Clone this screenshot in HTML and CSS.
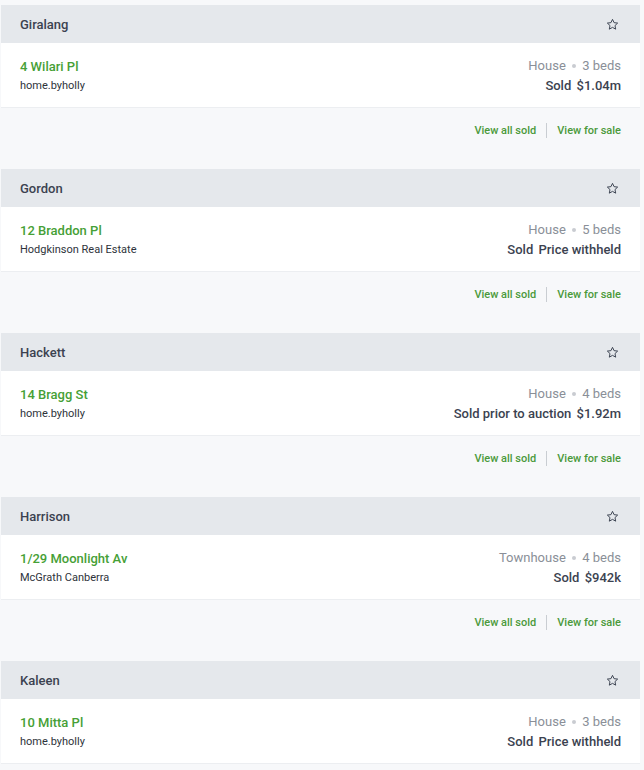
FILE: index.html
```html
<!DOCTYPE html>
<html lang="en">
<head>
    <meta charset="UTF-8">
    <meta name="viewport" content="width=device-width, initial-scale=1.0">
    <title>Recently sold</title>
    <link rel="stylesheet" href="styles.css">
</head>
<body>
    <div class="suburb-list">
        <section class="suburb">
            <div class="suburb-header">
                <h2>Giralang</h2>
                <svg class="star" viewBox="0 0 24 24"><path d="M12 2.5l2.9 6.1 6.6.8-4.9 4.6 1.3 6.6L12 17.3l-5.9 3.3 1.3-6.6-4.9-4.6 6.6-.8z"/></svg>
            </div>
            <div class="listing">
                <div class="listing-left">
                    <a class="address" href="#">4 Wilari Pl</a>
                    <span class="agency">home.byholly</span>
                </div>
                <div class="listing-right">
                    <span class="features">House <span class="dot"></span> 3 beds</span>
                    <span class="price"><span class="status">Sold</span> $1.04m</span>
                </div>
            </div>
            <div class="suburb-links">
                <a href="#">View all sold</a>
                <span class="divider"></span>
                <a href="#">View for sale</a>
            </div>
        </section>

        <section class="suburb">
            <div class="suburb-header">
                <h2>Gordon</h2>
                <svg class="star" viewBox="0 0 24 24"><path d="M12 2.5l2.9 6.1 6.6.8-4.9 4.6 1.3 6.6L12 17.3l-5.9 3.3 1.3-6.6-4.9-4.6 6.6-.8z"/></svg>
            </div>
            <div class="listing">
                <div class="listing-left">
                    <a class="address" href="#">12 Braddon Pl</a>
                    <span class="agency">Hodgkinson Real Estate</span>
                </div>
                <div class="listing-right">
                    <span class="features">House <span class="dot"></span> 5 beds</span>
                    <span class="price"><span class="status">Sold</span> Price withheld</span>
                </div>
            </div>
            <div class="suburb-links">
                <a href="#">View all sold</a>
                <span class="divider"></span>
                <a href="#">View for sale</a>
            </div>
        </section>

        <section class="suburb">
            <div class="suburb-header">
                <h2>Hackett</h2>
                <svg class="star" viewBox="0 0 24 24"><path d="M12 2.5l2.9 6.1 6.6.8-4.9 4.6 1.3 6.6L12 17.3l-5.9 3.3 1.3-6.6-4.9-4.6 6.6-.8z"/></svg>
            </div>
            <div class="listing">
                <div class="listing-left">
                    <a class="address" href="#">14 Bragg St</a>
                    <span class="agency">home.byholly</span>
                </div>
                <div class="listing-right">
                    <span class="features">House <span class="dot"></span> 4 beds</span>
                    <span class="price"><span class="status">Sold prior to auction</span> $1.92m</span>
                </div>
            </div>
            <div class="suburb-links">
                <a href="#">View all sold</a>
                <span class="divider"></span>
                <a href="#">View for sale</a>
            </div>
        </section>

        <section class="suburb">
            <div class="suburb-header">
                <h2>Harrison</h2>
                <svg class="star" viewBox="0 0 24 24"><path d="M12 2.5l2.9 6.1 6.6.8-4.9 4.6 1.3 6.6L12 17.3l-5.9 3.3 1.3-6.6-4.9-4.6 6.6-.8z"/></svg>
            </div>
            <div class="listing">
                <div class="listing-left">
                    <a class="address" href="#">1/29 Moonlight Av</a>
                    <span class="agency">McGrath Canberra</span>
                </div>
                <div class="listing-right">
                    <span class="features">Townhouse <span class="dot"></span> 4 beds</span>
                    <span class="price"><span class="status">Sold</span> $942k</span>
                </div>
            </div>
            <div class="suburb-links">
                <a href="#">View all sold</a>
                <span class="divider"></span>
                <a href="#">View for sale</a>
            </div>
        </section>

        <section class="suburb">
            <div class="suburb-header">
                <h2>Kaleen</h2>
                <svg class="star" viewBox="0 0 24 24"><path d="M12 2.5l2.9 6.1 6.6.8-4.9 4.6 1.3 6.6L12 17.3l-5.9 3.3 1.3-6.6-4.9-4.6 6.6-.8z"/></svg>
            </div>
            <div class="listing">
                <div class="listing-left">
                    <a class="address" href="#">10 Mitta Pl</a>
                    <span class="agency">home.byholly</span>
                </div>
                <div class="listing-right">
                    <span class="features">House <span class="dot"></span> 3 beds</span>
                    <span class="price"><span class="status">Sold</span> Price withheld</span>
                </div>
            </div>
            <div class="suburb-links">
                <a href="#">View all sold</a>
                <span class="divider"></span>
                <a href="#">View for sale</a>
            </div>
        </section>
    </div>
</body>
</html>
```

FILE: styles.css
```css
body {
    margin: 0;
    background-color: #f7f8fa;
    font-family: Roboto, "Noto Sans", sans-serif;
    color: #3b4250;
}
.suburb-list {
    margin: 5px 4px 0 1px;
}
.suburb {
    margin-bottom: 17px;
}
.suburb-header {
    display: flex;
    align-items: center;
    justify-content: space-between;
    height: 38px;
    padding: 0 21px 0 19px;
    background-color: #e5e8ec;
}
.suburb-header h2 {
    margin: 0;
    font-size: 13px;
    font-weight: 500;
    color: #3b4250;
}
.star {
    width: 13px;
    height: 13px;
    fill: none;
    stroke: #3b4250;
    stroke-width: 1.8;
    stroke-linejoin: round;
}
.listing {
    display: flex;
    justify-content: space-between;
    height: 64px;
    padding: 0 19px;
    background-color: #fff;
    border-bottom: 1px solid #eceef1;
}
.listing-left,
.listing-right {
    display: flex;
    flex-direction: column;
    justify-content: center;
    gap: 5px;
    padding-top: 1px;
}
.listing-right {
    align-items: flex-end;
}
.address {
    font-size: 13px;
    font-weight: 500;
    color: #46a036;
    text-decoration: none;
}
.agency {
    font-size: 11px;
    color: #2e333b;
}
.features {
    font-size: 13px;
    color: #8a8f98;
}
.dot {
    display: inline-block;
    width: 4px;
    height: 4px;
    margin: 0 3px 2px;
    border-radius: 50%;
    background-color: #c9ccd1;
    vertical-align: middle;
}
.price {
    font-size: 13px;
    font-weight: 500;
    color: #3b4250;
}
.status {
    margin-right: 2px;
}
.suburb-links {
    display: flex;
    align-items: center;
    justify-content: flex-end;
    gap: 10px;
    height: 44px;
    padding: 0 19px;
}
.suburb-links a {
    font-size: 11px;
    font-weight: 500;
    color: #4b9a3b;
    text-decoration: none;
}
.divider {
    width: 1px;
    height: 15px;
    background-color: #c9cdd2;
}
```
